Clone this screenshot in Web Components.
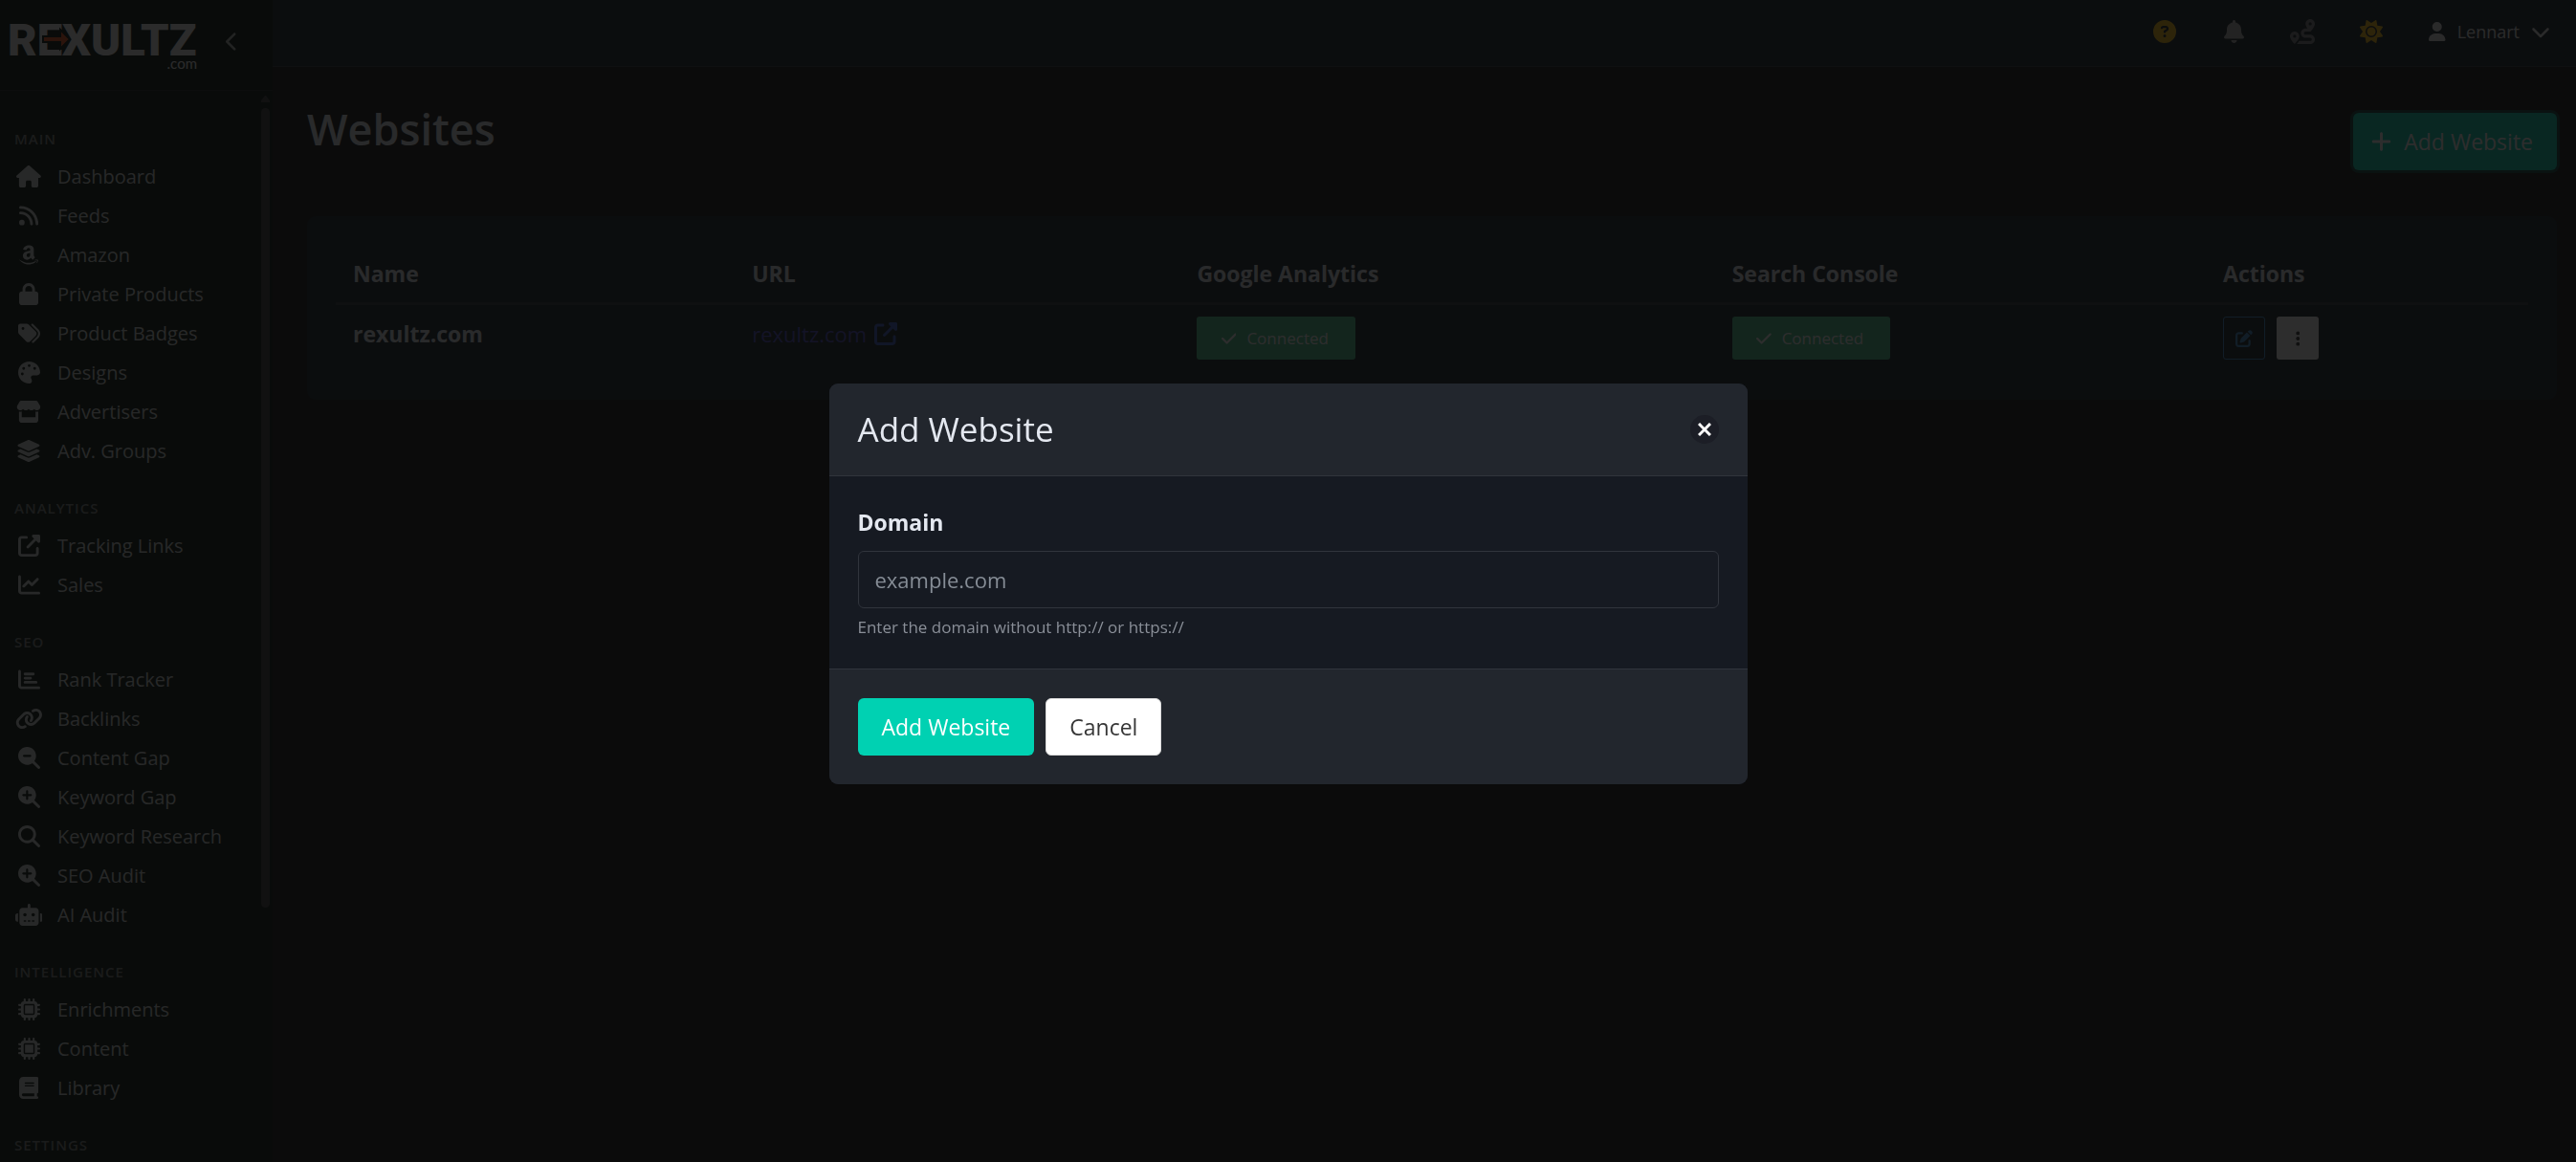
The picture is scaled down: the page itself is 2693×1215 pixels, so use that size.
<!DOCTYPE html>
<html lang="en">
<head>
<meta charset="utf-8">
<title>Websites - Rexultz</title>
<style>
  html, body {
    height: 100%;
  }
  body {
    margin: 0;
    overflow: hidden;
    background: #111111;
    color: #e4e8f0;
    font-family: "Segoe UI", "Open Sans", "Noto Sans", sans-serif;
    font-size: 23px;
    line-height: 36px;
  }
</style>
</head>
<body>

<app-shell>
  <side-nav slot="side">
    <nav-group heading="Main">
      <nav-item icon="house">Dashboard</nav-item>
      <nav-item icon="rss">Feeds</nav-item>
      <nav-item icon="amazon">Amazon</nav-item>
      <nav-item icon="lock">Private Products</nav-item>
      <nav-item icon="tags">Product Badges</nav-item>
      <nav-item icon="palette">Designs</nav-item>
      <nav-item icon="store">Advertisers</nav-item>
      <nav-item icon="layers">Adv. Groups</nav-item>
    </nav-group>
    <nav-group heading="Analytics">
      <nav-item icon="external">Tracking Links</nav-item>
      <nav-item icon="chartline">Sales</nav-item>
    </nav-group>
    <nav-group heading="SEO">
      <nav-item icon="chartbar">Rank Tracker</nav-item>
      <nav-item icon="link">Backlinks</nav-item>
      <nav-item icon="searchminus">Content Gap</nav-item>
      <nav-item icon="searchplus">Keyword Gap</nav-item>
      <nav-item icon="search">Keyword Research</nav-item>
      <nav-item icon="searchplus">SEO Audit</nav-item>
      <nav-item icon="robot">AI Audit</nav-item>
    </nav-group>
    <nav-group heading="Intelligence">
      <nav-item icon="chip">Enrichments</nav-item>
      <nav-item icon="chip">Content</nav-item>
      <nav-item icon="book">Library</nav-item>
    </nav-group>
    <nav-group heading="Settings"></nav-group>
  </side-nav>

  <top-bar slot="top">Lennart</top-bar>

  <page-head>
    Websites
    <ui-button slot="action" kind="primary" icon="plus" focused>Add Website</ui-button>
  </page-head>
  <site-table></site-table>
</app-shell>

<modal-card heading="Add Website">
  <domain-field></domain-field>
  <ui-button slot="foot" kind="primary">Add Website</ui-button>
  <ui-button slot="foot" kind="light">Cancel</ui-button>
</modal-card>

<script>
// name: [viewBox width, path], every icon is 512 high
const SEARCH = "M416 208c0 45.9-14.9 88.3-40 122.7L502.6 457.4c12.5 12.5 12.5 32.8 0 45.3s-32.8 12.5-45.3 0L330.7 376c-34.4 25.2-76.8 40-122.7 40C93.1 416 0 322.9 0 208S93.1 0 208 0S416 93.1 416 208z";
const ICONS = {
  house: [576, "M575.8 255.5c0 18-15 32.1-32 32.1h-32l.7 160.2c0 2.7-.2 5.4-.5 8.1V472c0 22.1-17.9 40-40 40H392c-22.1 0-40-17.9-40-40V384c0-17.7-14.3-32-32-32H256c-17.7 0-32 14.3-32 32v88c0 22.1-17.9 40-40 40H104c-22.1 0-40-17.9-40-40V287.6H32c-18 0-32-14-32-32.1c0-9 3-17 10-24L266.4 8c7-7 15-8 22-8s15 2 21 7L564.8 231.5c8 7 12 15 11 24z"],
  rss: [448, "M0 64C0 46.3 14.3 32 32 32c229.8 0 416 186.2 416 416c0 17.7-14.3 32-32 32s-32-14.3-32-32C384 253.6 226.4 96 32 96C14.3 96 0 81.7 0 64zM0 416a64 64 0 1 1 128 0A64 64 0 1 1 0 416zM32 160c159.1 0 288 128.9 288 288c0 17.7-14.3 32-32 32s-32-14.3-32-32c0-123.7-100.3-224-224-224c-17.7 0-32-14.3-32-32s14.3-32 32-32z"],
  amazon: [448, "M257.2 162.7c-48.7 1.8-169.5 15.5-169.5 117.5 0 109.5 138.3 114 183.5 43.2 6.5 10.2 35.4 37.5 45.3 46.8l56.8-56S341 288.9 341 261.4V114.3C341 89 316.5 32 228.7 32 140.7 32 94 87 94 136.3l73.5 6.8c16.3-49.5 54.2-49.5 54.2-49.5 40.7-.1 35.5 29.8 35.5 69.1zm0 86.8c0 80-84.2 68-84.2 17.2 0-47.2 50.5-56.7 84.2-57.8v40.6zm136 163.5c-7.7 10-70 67-174.5 67S34.2 408.5 9.7 379c-6.8-7.7 1-11.3 5.5-8.3C88.5 415.2 203 488.5 387.7 401c7.5-3.7 13.3 2 5.5 12zm39.8 2.2c-6.5 15.8-16 26.8-21.2 31-5.5 4.5-9.5 2.7-6.5-3.8s19.3-46.5 12.7-55c-6.5-8.3-37-4.3-48-3.2-10.8 1-13 2-14-.3-2.3-5.7 21.7-15.5 37.5-17.5 15.7-1.8 41-.8 46 5.7 3.7 5.1 0 27.1-6.5 43.1z"],
  lock: [448, "M144 144v48H304V144c0-44.2-35.8-80-80-80s-80 35.8-80 80zM80 192V144C80 64.5 144.5 0 224 0s144 64.5 144 144v48h16c35.3 0 64 28.7 64 64V448c0 35.3-28.7 64-64 64H64c-35.3 0-64-28.7-64-64V256c0-35.3 28.7-64 64-64H80z"],
  tags: [512, "M345 39.1L472.8 168.4c52.4 53 52.4 138.2 0 191.2L360.8 472.9c-9.3 9.4-24.5 9.5-33.9 .2s-9.5-24.5-.2-33.9L438.6 325.9c33.9-34.3 33.9-89.4 0-123.7L310.9 72.9c-9.3-9.4-9.2-24.6 .2-33.9s24.6-9.2 33.9 .2zM0 229.5V80C0 53.5 21.5 32 48 32H197.5c17 0 33.3 6.7 45.3 18.7l168 168c25 25 25 65.5 0 90.5L277.3 442.7c-25 25-65.5 25-90.5 0l-168-168C6.7 262.7 0 246.5 0 229.5zM144 144a32 32 0 1 0 -64 0 32 32 0 1 0 64 0z"],
  palette: [512, "M512 256c0 .9 0 1.8 0 2.7c-.4 36.5-33.6 61.3-70.1 61.3H344c-26.5 0-48 21.5-48 48c0 3.4 .4 6.7 1 9.9c2.1 10.2 6.5 20 10.8 29.9c6.1 13.8 12.1 27.5 12.1 42c0 31.8-21.6 60.7-53.4 62c-3.5 .1-7 .2-10.6 .2C114.6 512 0 397.4 0 256S114.6 0 256 0S512 114.6 512 256zM128 288a32 32 0 1 0 -64 0 32 32 0 1 0 64 0zm0-96a32 32 0 1 0 0-64 32 32 0 1 0 0 64zM288 96a32 32 0 1 0 -64 0 32 32 0 1 0 64 0zm96 96a32 32 0 1 0 0-64 32 32 0 1 0 0 64z"],
  store: [576, "M547.6 103.8L490.3 13.1C485.2 5 476.1 0 466.4 0H109.6C99.9 0 90.8 5 85.7 13.1L28.3 103.8c-29.6 46.8-3.4 111.9 51.9 119.4c4 .5 8.1 .8 12.1 .8c26.1 0 49.3-11.4 65.2-29c15.9 17.6 39.1 29 65.2 29c26.1 0 49.3-11.4 65.2-29c15.9 17.6 39.1 29 65.2 29c26.2 0 49.3-11.4 65.2-29c16 17.6 39.1 29 65.2 29c4.1 0 8.1-.3 12.1-.8c55.5-7.4 81.8-72.5 52.1-119.4zM499.7 254.9c-5.3 .7-10.7 1.1-16.2 1.1c-12.4 0-24.3-1.9-35.4-5.3V384H128V250.6c-11.2 3.5-23.2 5.4-35.6 5.4c-5.5 0-11-.4-16.3-1.1c-4.1-.6-8.1-1.3-12-2.3V448c0 35.3 28.7 64 64 64H448c35.3 0 64-28.7 64-64V252.6c-4 1-8 1.8-12.3 2.3z"],
  layers: [576, "M264.5 5.2c14.9-6.9 32.1-6.9 47 0l218.6 101c8.5 3.9 13.9 12.4 13.9 21.8s-5.4 17.9-13.9 21.8l-218.6 101c-14.9 6.9-32.1 6.9-47 0L45.9 149.8C37.4 145.8 32 137.3 32 128s5.4-17.9 13.9-21.8L264.5 5.2zM476.9 209.6l53.2 24.6c8.5 3.9 13.9 12.4 13.9 21.8s-5.4 17.9-13.9 21.8l-218.6 101c-14.9 6.9-32.1 6.9-47 0L45.9 277.8C37.4 273.8 32 265.3 32 256s5.4-17.9 13.9-21.8l53.2-24.6 152 70.2c23.4 10.8 50.4 10.8 73.8 0l152-70.2zm-152 198.2l152-70.2 53.2 24.6c8.5 3.9 13.9 12.4 13.9 21.8s-5.4 17.9-13.9 21.8l-218.6 101c-14.9 6.9-32.1 6.9-47 0L45.9 405.8C37.4 401.8 32 393.3 32 384s5.4-17.9 13.9-21.8l53.2-24.6 152 70.2c23.4 10.8 50.4 10.8 73.8 0z"],
  external: [512, "M352 0c-12.9 0-24.6 7.8-29.6 19.8s-2.2 25.7 6.9 34.9L370.7 96 201.4 265.4c-12.5 12.5-12.5 32.8 0 45.3s32.8 12.5 45.3 0L416 141.3l41.4 41.4c9.2 9.2 22.9 11.9 34.9 6.9s19.8-16.6 19.8-29.6V32c0-17.7-14.3-32-32-32H352zM80 32C35.8 32 0 67.8 0 112V432c0 44.2 35.8 80 80 80H400c44.2 0 80-35.8 80-80V320c0-17.7-14.3-32-32-32s-32 14.3-32 32V432c0 8.8-7.2 16-16 16H80c-8.8 0-16-7.2-16-16V112c0-8.8 7.2-16 16-16H192c17.7 0 32-14.3 32-32s-14.3-32-32-32H80z"],
  chartline: [512, "M64 64c0-17.7-14.3-32-32-32S0 46.3 0 64V400c0 44.2 35.8 80 80 80H480c17.7 0 32-14.3 32-32s-14.3-32-32-32H80c-8.8 0-16-7.2-16-16V64zm406.6 86.6c12.5-12.5 12.5-32.8 0-45.3s-32.8-12.5-45.3 0L320 210.7l-57.4-57.4c-12.5-12.5-32.8-12.5-45.3 0l-112 112c-12.5 12.5-12.5 32.8 0 45.3s32.8 12.5 45.3 0L240 221.3l57.4 57.4c12.5 12.5 32.8 12.5 45.3 0l128-128z"],
  chartbar: [512, "M32 32c17.7 0 32 14.3 32 32V400c0 8.8 7.2 16 16 16H480c17.7 0 32 14.3 32 32s-14.3 32-32 32H80c-44.2 0-80-35.8-80-80V64C0 46.3 14.3 32 32 32zM128 128c0-17.7 14.3-32 32-32H352c17.7 0 32 14.3 32 32s-14.3 32-32 32H160c-17.7 0-32-14.3-32-32zm32 64H288c17.7 0 32 14.3 32 32s-14.3 32-32 32H160c-17.7 0-32-14.3-32-32s14.3-32 32-32zm0 96H416c17.7 0 32 14.3 32 32s-14.3 32-32 32H160c-17.7 0-32-14.3-32-32s14.3-32 32-32z"],
  link: [640, "M579.8 267.7c56.5-56.5 56.5-148 0-204.5c-50-50-128.8-56.5-186.3-15.4l-1.6 1.1c-14.4 10.3-17.7 30.3-7.4 44.6s30.3 17.7 44.6 7.4l1.6-1.1c32.1-22.9 76-19.3 103.8 8.6c31.5 31.5 31.5 82.5 0 114L422.3 334.8c-31.5 31.5-82.5 31.5-114 0c-27.9-27.9-31.5-71.8-8.6-103.8l1.1-1.6c10.3-14.4 6.9-34.4-7.4-44.6s-34.4-6.9-44.6 7.4l-1.1 1.6C206.5 251.2 213 330 263 380c56.5 56.5 148 56.5 204.5 0L579.8 267.7zM60.2 244.3c-56.5 56.5-56.5 148 0 204.5c50 50 128.8 56.5 186.3 15.4l1.6-1.1c14.4-10.3 17.7-30.3 7.4-44.6s-30.3-17.7-44.6-7.4l-1.6 1.1c-32.1 22.9-76 19.3-103.8-8.6C74 372 74 321 105.5 289.5L217.7 177.2c31.5-31.5 82.5-31.5 114 0c27.9 27.9 31.5 71.8 8.6 103.9l-1.1 1.6c-10.3 14.4-6.9 34.4 7.4 44.6s34.4 6.9 44.6-7.4l1.1-1.6C433.5 260.8 427 182 377 132c-56.5-56.5-148-56.5-204.5 0L60.2 244.3z"],
  search: [512, SEARCH + "M208 352a144 144 0 1 0 0-288 144 144 0 1 0 0 288z"],
  searchminus: [512, SEARCH + "M136 184c-13.3 0-24 10.7-24 24s10.7 24 24 24H280c13.3 0 24-10.7 24-24s-10.7-24-24-24H136z"],
  searchplus: [512, SEARCH + "M184 296c0 13.3 10.7 24 24 24s24-10.7 24-24V232h64c13.3 0 24-10.7 24-24s-10.7-24-24-24H232V120c0-13.3-10.7-24-24-24s-24 10.7-24 24v64H120c-13.3 0-24 10.7-24 24s10.7 24 24 24h64v64z"],
  robot: [640, "M320 0c17.7 0 32 14.3 32 32V96H472c39.8 0 72 32.2 72 72V440c0 39.8-32.2 72-72 72H168c-39.8 0-72-32.2-72-72V168c0-39.8 32.2-72 72-72H288V32c0-17.7 14.3-32 32-32zM208 384c-8.8 0-16 7.2-16 16s7.2 16 16 16h32c8.8 0 16-7.2 16-16s-7.2-16-16-16H208zm96 0c-8.8 0-16 7.2-16 16s7.2 16 16 16h32c8.8 0 16-7.2 16-16s-7.2-16-16-16H304zm96 0c-8.8 0-16 7.2-16 16s7.2 16 16 16h32c8.8 0 16-7.2 16-16s-7.2-16-16-16H400zM264 256a40 40 0 1 0 -80 0 40 40 0 1 0 80 0zm152 40a40 40 0 1 0 0-80 40 40 0 1 0 0 80zM48 224H64V416H48c-26.5 0-48-21.5-48-48V272c0-26.5 21.5-48 48-48zm544 0c26.5 0 48 21.5 48 48v96c0 26.5-21.5 48-48 48H576V224h16z"],
  chip: [512, "M176 24c0-13.3-10.7-24-24-24s-24 10.7-24 24V64c-35.3 0-64 28.7-64 64H24c-13.3 0-24 10.7-24 24s10.7 24 24 24H64v56H24c-13.3 0-24 10.7-24 24s10.7 24 24 24H64v56H24c-13.3 0-24 10.7-24 24s10.7 24 24 24H64c0 35.3 28.7 64 64 64v40c0 13.3 10.7 24 24 24s24-10.7 24-24V448h56v40c0 13.3 10.7 24 24 24s24-10.7 24-24V448h56v40c0 13.3 10.7 24 24 24s24-10.7 24-24V448c35.3 0 64-28.7 64-64h40c13.3 0 24-10.7 24-24s-10.7-24-24-24H448V280h40c13.3 0 24-10.7 24-24s-10.7-24-24-24H448V176h40c13.3 0 24-10.7 24-24s-10.7-24-24-24H448c0-35.3-28.7-64-64-64V24c0-13.3-10.7-24-24-24s-24 10.7-24 24V64H280V24c0-13.3-10.7-24-24-24s-24 10.7-24 24V64H176V24zM160 128H352c17.7 0 32 14.3 32 32V352c0 17.7-14.3 32-32 32H160c-17.7 0-32-14.3-32-32V160c0-17.7 14.3-32 32-32zm192 32H160V352H352V160z"],
  book: [448, "M96 0C43 0 0 43 0 96V416c0 53 43 96 96 96H416c17.7 0 32-14.3 32-32s-14.3-32-32-32V384c17.7 0 32-14.3 32-32V32c0-17.7-14.3-32-32-32H96zm0 384H352v64H96c-17.7 0-32-14.3-32-32s14.3-32 32-32zm32-240c0-8.8 7.2-16 16-16H336c8.8 0 16 7.2 16 16s-7.2 16-16 16H144c-8.8 0-16-7.2-16-16zm16 48H336c8.8 0 16 7.2 16 16s-7.2 16-16 16H144c-8.8 0-16-7.2-16-16s7.2-16 16-16z"],
  question: [512, "M256 512A256 256 0 1 0 256 0a256 256 0 1 0 0 512zM169.8 165.3c7.9-22.3 29.1-37.3 52.8-37.3h58.3c34.9 0 63.1 28.3 63.1 63.1c0 22.6-12.1 43.5-31.7 54.8L280 264.4c-.2 13-10.9 23.6-24 23.6c-13.3 0-24-10.7-24-24V250.5c0-8.6 4.6-16.5 12.1-20.8l44.3-25.4c4.7-2.7 7.6-7.7 7.6-13.1c0-8.4-6.8-15.1-15.1-15.1H222.6c-3.4 0-6.4 2.1-7.5 5.3l-.4 1.2c-4.4 12.5-18.2 19-30.6 14.6s-19-18.2-14.6-30.6l.4-1.2zM224 352a32 32 0 1 1 64 0 32 32 0 1 1 -64 0z"],
  bell: [448, "M224 0c-17.7 0-32 14.3-32 32V51.2C119 66 64 130.6 64 208v18.8c0 47-17.3 92.4-48.5 127.6l-7.4 8.3c-8.4 9.4-10.4 22.9-5.3 34.4S19.4 416 32 416H416c12.6 0 24-7.4 29.2-18.9s3.1-25-5.3-34.4l-7.4-8.3C401.3 319.2 384 273.9 384 226.8V208c0-77.4-55-142-128-156.8V32c0-17.7-14.3-32-32-32zm45.3 493.3c12-12 18.7-28.3 18.7-45.3H160c0 17 6.7 33.3 18.7 45.3s28.3 18.7 45.3 18.7s33.3-6.7 45.3-18.7z"],
  route: [512, "M512 96c0 50.2-59.1 125.1-84.6 155c-3.8 4.4-9.4 6.1-14.5 5H320c-17.7 0-32 14.3-32 32s14.3 32 32 32h96c53 0 96 43 96 96s-43 96-96 96H139.6c8.7-9.9 19.3-22.6 30-36.8c6.3-8.4 12.8-17.6 19-27.2H416c17.7 0 32-14.3 32-32s-14.3-32-32-32H320c-53 0-96-43-96-96s43-96 96-96h39.8c-21-31.5-39.8-67.7-39.8-96c0-53 43-96 96-96s96 43 96 96zM117.1 489.1c-3.8 4.3-7.2 8.1-10.1 11.3l-1.8 2-.2-.2c-6 4.6-14.6 4-20-1.8C59.8 473 0 402.5 0 352c0-53 43-96 96-96s96 43 96 96c0 30-21.1 67-43.5 97.9c-10.7 14.7-21.7 28-30.8 38.5l-.6 .7zM128 352a32 32 0 1 0 -64 0 32 32 0 1 0 64 0zM416 128a32 32 0 1 0 0-64 32 32 0 1 0 0 64z"],
  sun: [512, "M361.5 1.2c5 2.1 8.6 6.6 9.6 11.9L391 121l107.9 19.8c5.3 1 9.8 4.6 11.9 9.6s1.5 10.7-1.6 15.2L446.9 256l62.3 90.3c3.1 4.5 3.7 10.2 1.6 15.2s-6.6 8.6-11.9 9.6L391 391 371.1 498.9c-1 5.3-4.6 9.8-9.6 11.9s-10.7 1.5-15.2-1.6L256 446.9l-90.3 62.3c-4.5 3.1-10.2 3.7-15.2 1.6s-8.6-6.6-9.6-11.9L121 391 13.1 371.1c-5.3-1-9.8-4.6-11.9-9.6s-1.5-10.7 1.6-15.2L65.1 256 2.8 165.7c-3.1-4.5-3.7-10.2-1.6-15.2s6.6-8.6 11.9-9.6L121 121 140.9 13.1c1-5.3 4.6-9.8 9.6-11.9s10.7-1.5 15.2 1.6L256 65.1 346.3 2.8c4.5-3.1 10.2-3.7 15.2-1.6zM160 256a96 96 0 1 1 192 0 96 96 0 1 1 -192 0zm224 0a128 128 0 1 0 -256 0 128 128 0 1 0 256 0z"],
  user: [448, "M224 256A128 128 0 1 0 224 0a128 128 0 1 0 0 256zm-45.7 48C79.8 304 0 383.8 0 482.3C0 498.7 13.3 512 29.7 512H418.3c16.4 0 29.7-13.3 29.7-29.7C448 383.8 368.2 304 269.7 304H178.3z"],
  down: [512, "M233.4 406.6c12.5 12.5 32.8 12.5 45.3 0l192-192c12.5-12.5 12.5-32.8 0-45.3s-32.8-12.5-45.3 0L256 338.7 86.6 169.4c-12.5-12.5-32.8-12.5-45.3 0s-12.5 32.8 0 45.3l192 192z"],
  left: [320, "M9.4 233.4c-12.5 12.5-12.5 32.8 0 45.3l192 192c12.5 12.5 32.8 12.5 45.3 0s12.5-32.8 0-45.3L77.3 256 246.6 86.6c12.5-12.5 12.5-32.8 0-45.3s-32.8-12.5-45.3 0l-192 192z"],
  plus: [448, "M256 80c0-17.7-14.3-32-32-32s-32 14.3-32 32V224H48c-17.7 0-32 14.3-32 32s14.3 32 32 32H192V432c0 17.7 14.3 32 32 32s32-14.3 32-32V288H400c17.7 0 32-14.3 32-32s-14.3-32-32-32H256V80z"],
  check: [448, "M438.6 105.4c12.5 12.5 12.5 32.8 0 45.3l-256 256c-12.5 12.5-32.8 12.5-45.3 0l-128-128c-12.5-12.5-12.5-32.8 0-45.3s32.8-12.5 45.3 0L160 338.7 393.4 105.4c12.5-12.5 32.8-12.5 45.3 0z"],
  edit: [512, "M471.6 21.7c-21.9-21.9-57.3-21.9-79.2 0L362.3 51.7l97.9 97.9 30.1-30.1c21.9-21.9 21.9-57.3 0-79.2L471.6 21.7zm-299.2 220c-6.1 6.1-10.8 13.6-13.5 21.9l-29.6 88.8c-2.9 8.6-.6 18.1 5.8 24.6s15.9 8.7 24.6 5.8l88.8-29.6c8.2-2.7 15.7-7.4 21.9-13.5L437.7 172.3 339.7 74.3 172.4 241.7zM96 64C43 64 0 107 0 160V416c0 53 43 96 96 96H352c53 0 96-43 96-96V320c0-17.7-14.3-32-32-32s-32 14.3-32 32v96c0 17.7-14.3 32-32 32H96c-17.7 0-32-14.3-32-32V160c0-17.7 14.3-32 32-32h96c17.7 0 32-14.3 32-32s-14.3-32-32-32H96z"],
  dots: [128, "M64 360a56 56 0 1 0 0 112 56 56 0 1 0 0-112zm0-160a56 56 0 1 0 0 112 56 56 0 1 0 0-112zM120 96A56 56 0 1 0 8 96a56 56 0 1 0 112 0z"]
};

// make a template and clone it into the element's shadow root
function attach(el, html) {
  const template = document.createElement("template");
  template.innerHTML = html;
  el.attachShadow({ mode: "open" }).appendChild(template.content.cloneNode(true));
}

class UiIcon extends HTMLElement {
  connectedCallback() {
    if (this.shadowRoot) return;
    const [w, d] = ICONS[this.getAttribute("name")];
    attach(this, `
      <style>
        :host { display: inline-flex; justify-content: center; flex: none; }
        svg { display: block; height: var(--icon-size, 24px); fill: currentColor; fill-rule: evenodd; }
      </style>
      <svg viewBox="0 0 ${w} 512" aria-hidden="true"><path d="${d}"/></svg>
    `);
  }
}

class UiButton extends HTMLElement {
  connectedCallback() {
    if (this.shadowRoot) return;
    const icon = this.getAttribute("icon");
    const label = this.getAttribute("label");
    attach(this, `
      <style>
        :host { display: inline-block; }
        button {
          display: flex;
          align-items: center;
          justify-content: center;
          gap: 12px;
          box-sizing: border-box;
          height: 60px;
          padding: 0 24px;
          border: 1px solid transparent;
          border-radius: 6px;
          font: inherit;
          color: #ffffff;
        }
        ui-icon { width: 24px; }
        :host([icon]) button { padding: 0 24px 0 16px; }
        :host([kind="primary"]) button { background: #00d1b2; }
        :host([kind="light"]) button { background: #ffffff; border-color: #dbdbdb; color: #363636; }
        :host([kind="success"]) button { background: #48c78e; }
        :host([kind="edit"]) button { background: transparent; border-color: #3e8ed0; color: #3e8ed0; }
        :host([kind="more"]) button { background: #ffffff; color: #363636; }
        :host([focused]) button { box-shadow: 0 0 0 3px rgba(0, 209, 178, 0.25); }
        :host([small]) button {
          height: 45px;
          gap: 7px;
          padding: 0 27px 0 20px;
          border-radius: 3px;
          font-size: 17px;
          --icon-size: 18px;
        }
        :host([small][label]) button { width: 44px; padding: 0; }
      </style>
      <button type="button"${label ? ` aria-label="${label}"` : ""}>
        ${icon ? `<ui-icon name="${icon}"></ui-icon>` : ""}${label ? "" : "<slot></slot>"}
      </button>
    `);
  }
}

class BrandLogo extends HTMLElement {
  connectedCallback() {
    attach(this, `
      <style>
        :host { display: block; width: 202px; height: 66px; }
        svg { display: block; width: 100%; height: 100%; }
        .word { font: 900 47px Roboto, sans-serif; fill: #f2f2f2; }
        .com { font: 15px Lato, sans-serif; fill: #f2f2f2; }
      </style>
      <svg viewBox="0 0 202 66" role="img" aria-label="Rexultz.com">
        <text class="word" x="0" y="46">REXULTZ</text>
        <path d="M37 26h18v-7l10 10-10 10v-7h-18z" fill="#f05018" stroke="#03110a" stroke-width="2"/>
        <text class="com" x="198" y="60" text-anchor="end">.com</text>
      </svg>
    `);
  }
}

class NavItem extends HTMLElement {
  connectedCallback() {
    attach(this, `
      <style>
        :host { display: block; --icon-size: 23px; }
        a {
          display: flex;
          align-items: center;
          gap: 15px;
          height: 41px;
          color: #d4d8d8;
          font-size: 20px;
          text-decoration: none;
        }
        ui-icon { width: 30px; }
      </style>
      <a href="#"><ui-icon name="${this.getAttribute("icon")}"></ui-icon><span><slot></slot></span></a>
    `);
  }
}

class NavGroup extends HTMLElement {
  connectedCallback() {
    attach(this, `
      <style>
        :host { display: block; margin-bottom: 27px; }
        h2 {
          margin: 0 0 7px;
          font-size: 15px;
          line-height: 24px;
          font-weight: 600;
          letter-spacing: 1px;
          text-transform: uppercase;
          color: #7c8280;
        }
      </style>
      <h2>${this.getAttribute("heading")}</h2>
      <slot></slot>
    `);
  }
}

class SideNav extends HTMLElement {
  connectedCallback() {
    attach(this, `
      <style>
        :host {
          display: flex;
          flex-direction: column;
          height: 100vh;
          background: #03110a;
        }
        header {
          display: flex;
          align-items: center;
          justify-content: space-between;
          box-sizing: border-box;
          height: 95px;
          padding: 0 36px 4px 8px;
          border-bottom: 1px solid #16211c;
        }
        header button {
          padding: 0;
          border: 0;
          background: none;
          color: #b0b4b2;
          --icon-size: 21px;
        }
        .body { display: flex; flex: 1; min-height: 0; }
        nav { flex: 1; padding: 38px 0 0 15px; overflow: hidden; }
        .bar { display: flex; flex-direction: column; width: 9px; padding: 5px 3px 0 0; gap: 6px; }
        .bar svg { display: block; fill: #3c3c3c; }
        .thumb { height: 75%; border-radius: 5px; background: #3c3c3c; }
      </style>
      <header>
        <brand-logo></brand-logo>
        <button type="button" aria-label="Collapse menu"><ui-icon name="left"></ui-icon></button>
      </header>
      <div class="body">
        <nav><slot></slot></nav>
        <div class="bar">
          <svg width="9" height="7" viewBox="0 0 9 7"><path d="M4 0h1l4 5v2H0V5z"/></svg>
          <div class="thumb"></div>
        </div>
      </div>
    `);
  }
}

class TopBar extends HTMLElement {
  connectedCallback() {
    attach(this, `
      <style>
        :host {
          display: flex;
          align-items: center;
          justify-content: flex-end;
          gap: 48px;
          box-sizing: border-box;
          height: 70px;
          padding: 0 27px 4px 0;
          background: #141c26;
          border-bottom: 1px solid #2a323c;
          font-size: 18px;
        }
        button {
          display: flex;
          align-items: center;
          padding: 0;
          border: 0;
          background: none;
          font: inherit;
          color: #eaeaea;
        }
        .tool { width: 24px; justify-content: center; }
        .yellow { color: #ffc107; }
        .grey { color: #b5b5b5; }
        .dim { color: #808284; --icon-size: 26px; }
        .user { gap: 12px; }
        .user ui-icon { --icon-size: 20px; }
      </style>
      <button type="button" class="tool yellow" aria-label="Help"><ui-icon name="question"></ui-icon></button>
      <button type="button" class="tool grey" aria-label="Notifications"><ui-icon name="bell"></ui-icon></button>
      <button type="button" class="tool dim" aria-label="Tour"><ui-icon name="route"></ui-icon></button>
      <button type="button" class="tool yellow" aria-label="Theme"><ui-icon name="sun"></ui-icon></button>
      <button type="button" class="user">
        <ui-icon name="user"></ui-icon><span><slot></slot></span><ui-icon name="down"></ui-icon>
      </button>
    `);
  }
}

class PageHead extends HTMLElement {
  connectedCallback() {
    attach(this, `
      <style>
        :host {
          display: flex;
          align-items: center;
          justify-content: space-between;
          margin-bottom: 39px;
        }
        h1 { margin: 0 0 26px; font-size: 45px; line-height: 52px; font-weight: 600; }
      </style>
      <h1><slot></slot></h1>
      <slot name="action"></slot>
    `);
  }
}

class SiteTable extends HTMLElement {
  connectedCallback() {
    attach(this, `
      <style>
        :host { display: block; padding: 30px; border-radius: 9px; background: #141c24; }
        table { width: 100%; table-layout: fixed; border-collapse: separate; border-spacing: 0; }
        th, td { padding: 12px 18px; text-align: left; vertical-align: top; }
        th { border-bottom: 3px solid #2e343c; font-weight: 700; }
        tbody th { border: 0; }
        a {
          display: inline-flex;
          align-items: center;
          gap: 8px;
          color: #4c4ccc;
          font-size: 22px;
          text-decoration: none;
        }
        a ui-icon { color: #3c60d0; }
        .actions { display: flex; gap: 12px; }
        ui-button { display: block; width: max-content; }
      </style>
      <table>
        <colgroup>
          <col style="width: 18.2%"><col style="width: 20.3%"><col style="width: 24.4%"><col style="width: 22.4%"><col>
        </colgroup>
        <thead>
          <tr><th>Name</th><th>URL</th><th>Google Analytics</th><th>Search Console</th><th>Actions</th></tr>
        </thead>
        <tbody>
          <tr>
            <th scope="row">rexultz.com</th>
            <td><a href="#">rexultz.com<ui-icon name="external"></ui-icon></a></td>
            <td><ui-button kind="success" small icon="check">Connected</ui-button></td>
            <td><ui-button kind="success" small icon="check">Connected</ui-button></td>
            <td>
              <div class="actions">
                <ui-button kind="edit" small icon="edit" label="Edit"></ui-button>
                <ui-button kind="more" small icon="dots" label="More"></ui-button>
              </div>
            </td>
          </tr>
        </tbody>
      </table>
    `);
  }
}

class AppShell extends HTMLElement {
  connectedCallback() {
    attach(this, `
      <style>
        :host { display: grid; grid-template-columns: 285px 1fr; height: 100vh; overflow: hidden; }
        main { padding: 39px 20px 0 36px; }
      </style>
      <slot name="side"></slot>
      <div>
        <slot name="top"></slot>
        <main><slot></slot></main>
      </div>
    `);
  }
}

class DomainField extends HTMLElement {
  connectedCallback() {
    attach(this, `
      <style>
        :host { display: block; }
        label { display: block; margin-bottom: 12px; font-weight: 700; }
        input {
          display: block;
          box-sizing: border-box;
          width: 100%;
          height: 60px;
          padding: 0 17px;
          border: 1px solid #30343c;
          border-radius: 6px;
          background: #161a22;
          color: inherit;
          font: inherit;
          font-size: 22px;
        }
        input::placeholder { color: #868d96; opacity: 1; }
        p { margin: 6px 0 0; font-size: 17px; line-height: 27px; color: #8a8f98; }
      </style>
      <label for="domain">Domain</label>
      <input id="domain" type="text" placeholder="example.com">
      <p>Enter the domain without http:// or https://</p>
    `);
  }
}

class ModalCard extends HTMLElement {
  connectedCallback() {
    attach(this, `
      <style>
        /* the backdrop lies over the whole page */
        :host {
          position: fixed;
          inset: 0;
          display: grid;
          align-items: center;
          justify-items: center;
          padding-top: 5px;
          background: rgba(10, 10, 10, 0.86);
        }
        section { width: 100%; max-width: 960px; border-radius: 9px; overflow: hidden; background: #161a22; }
        header, footer { display: flex; align-items: center; padding: 30px; background: #22262d; }
        header { justify-content: space-between; border-bottom: 1px solid #30343c; }
        footer { gap: 12px; border-top: 1px solid #30343c; }
        h2 { margin: 0; font-size: 35px; line-height: 36px; font-weight: 400; }
        .close {
          width: 30px;
          height: 30px;
          padding: 0;
          border: 0;
          border-radius: 50%;
          background: #1c1e26;
        }
        .close svg { display: block; margin: auto; }
        .content { padding: 30px; }
      </style>
      <section role="dialog" aria-modal="true" aria-labelledby="title">
        <header>
          <h2 id="title">${this.getAttribute("heading")}</h2>
          <button type="button" class="close" aria-label="Close">
            <svg width="14" height="14" viewBox="0 0 14 14"><path d="M1 1l12 12M13 1L1 13" stroke="#ffffff" stroke-width="3"/></svg>
          </button>
        </header>
        <div class="content"><slot></slot></div>
        <footer><slot name="foot"></slot></footer>
      </section>
    `);
  }
}

customElements.define("ui-icon", UiIcon);
customElements.define("ui-button", UiButton);
customElements.define("brand-logo", BrandLogo);
customElements.define("nav-item", NavItem);
customElements.define("nav-group", NavGroup);
customElements.define("side-nav", SideNav);
customElements.define("top-bar", TopBar);
customElements.define("page-head", PageHead);
customElements.define("site-table", SiteTable);
customElements.define("app-shell", AppShell);
customElements.define("domain-field", DomainField);
customElements.define("modal-card", ModalCard);
</script>
</body>
</html>
